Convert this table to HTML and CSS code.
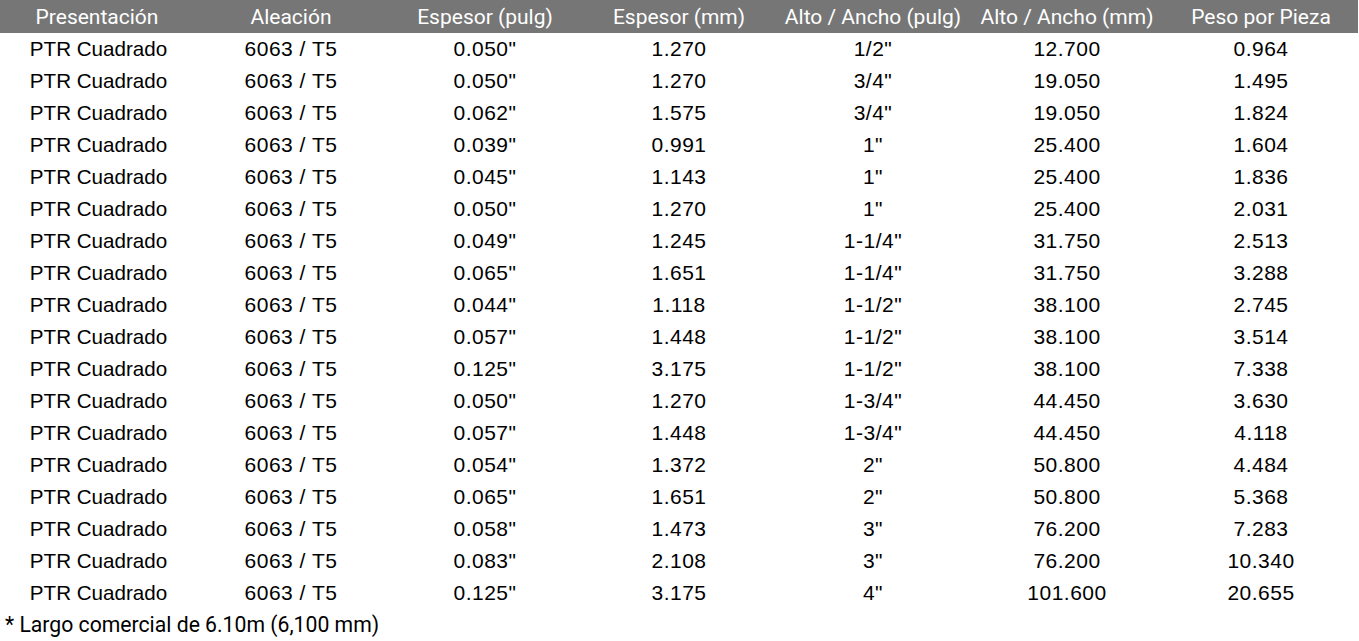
FILE: index.html
```html
<!DOCTYPE html>
<html lang="es">
<head>
<meta charset="utf-8">
<link rel="stylesheet" href="styles.css">
</head>
<body>
<table class="spec">
<thead>
<tr><th>Presentación</th><th>Aleación</th><th>Espesor (pulg)</th><th>Espesor (mm)</th><th>Alto / Ancho (pulg)</th><th>Alto / Ancho (mm)</th><th>Peso por Pieza</th></tr>
</thead>
<tbody>
<tr><td>PTR Cuadrado</td><td>6063 / T5</td><td>0.050"</td><td>1.270</td><td>1/2"</td><td>12.700</td><td>0.964</td></tr>
<tr><td>PTR Cuadrado</td><td>6063 / T5</td><td>0.050"</td><td>1.270</td><td>3/4"</td><td>19.050</td><td>1.495</td></tr>
<tr><td>PTR Cuadrado</td><td>6063 / T5</td><td>0.062"</td><td>1.575</td><td>3/4"</td><td>19.050</td><td>1.824</td></tr>
<tr><td>PTR Cuadrado</td><td>6063 / T5</td><td>0.039"</td><td>0.991</td><td>1"</td><td>25.400</td><td>1.604</td></tr>
<tr><td>PTR Cuadrado</td><td>6063 / T5</td><td>0.045"</td><td>1.143</td><td>1"</td><td>25.400</td><td>1.836</td></tr>
<tr><td>PTR Cuadrado</td><td>6063 / T5</td><td>0.050"</td><td>1.270</td><td>1"</td><td>25.400</td><td>2.031</td></tr>
<tr><td>PTR Cuadrado</td><td>6063 / T5</td><td>0.049"</td><td>1.245</td><td>1-1/4"</td><td>31.750</td><td>2.513</td></tr>
<tr><td>PTR Cuadrado</td><td>6063 / T5</td><td>0.065"</td><td>1.651</td><td>1-1/4"</td><td>31.750</td><td>3.288</td></tr>
<tr><td>PTR Cuadrado</td><td>6063 / T5</td><td>0.044"</td><td>1.118</td><td>1-1/2"</td><td>38.100</td><td>2.745</td></tr>
<tr><td>PTR Cuadrado</td><td>6063 / T5</td><td>0.057"</td><td>1.448</td><td>1-1/2"</td><td>38.100</td><td>3.514</td></tr>
<tr><td>PTR Cuadrado</td><td>6063 / T5</td><td>0.125"</td><td>3.175</td><td>1-1/2"</td><td>38.100</td><td>7.338</td></tr>
<tr><td>PTR Cuadrado</td><td>6063 / T5</td><td>0.050"</td><td>1.270</td><td>1-3/4"</td><td>44.450</td><td>3.630</td></tr>
<tr><td>PTR Cuadrado</td><td>6063 / T5</td><td>0.057"</td><td>1.448</td><td>1-3/4"</td><td>44.450</td><td>4.118</td></tr>
<tr><td>PTR Cuadrado</td><td>6063 / T5</td><td>0.054"</td><td>1.372</td><td>2"</td><td>50.800</td><td>4.484</td></tr>
<tr><td>PTR Cuadrado</td><td>6063 / T5</td><td>0.065"</td><td>1.651</td><td>2"</td><td>50.800</td><td>5.368</td></tr>
<tr><td>PTR Cuadrado</td><td>6063 / T5</td><td>0.058"</td><td>1.473</td><td>3"</td><td>76.200</td><td>7.283</td></tr>
<tr><td>PTR Cuadrado</td><td>6063 / T5</td><td>0.083"</td><td>2.108</td><td>3"</td><td>76.200</td><td>10.340</td></tr>
<tr><td>PTR Cuadrado</td><td>6063 / T5</td><td>0.125"</td><td>3.175</td><td>4"</td><td>101.600</td><td>20.655</td></tr>
</tbody>
</table>
<p class="note">* Largo comercial de 6.10m (6,100 mm)</p>
</body>
</html>
```
FILE: styles.css
```css
html, body {
  margin: 0;
  padding: 0;
  background: #ffffff;
}
.spec {
  width: 1358px;
  border-collapse: collapse;
  table-layout: fixed;
}
.spec th {
  height: 33px;
  padding: 0;
  background: #767676;
  color: #ffffff;
  font-family: Roboto, "Liberation Sans", sans-serif;
  font-weight: 400;
  font-size: 21px;
  text-align: center;
  white-space: nowrap;
}
.spec td {
  height: 32px;
  padding: 0;
  color: #000000;
  font-family: "Liberation Sans", Arial, sans-serif;
  font-size: 20.6px;
  text-align: center;
  white-space: nowrap;
}
.spec td + td {
  font-size: 21px;
  letter-spacing: 0.5px;
}
.spec td:first-child {
  padding-left: 3px;
}
.note {
  margin: 0;
  padding-left: 5px;
  height: 32px;
  line-height: 32px;
  font-family: Roboto, "Liberation Sans", sans-serif;
  font-size: 21.2px;
  color: #000000;
}
```
